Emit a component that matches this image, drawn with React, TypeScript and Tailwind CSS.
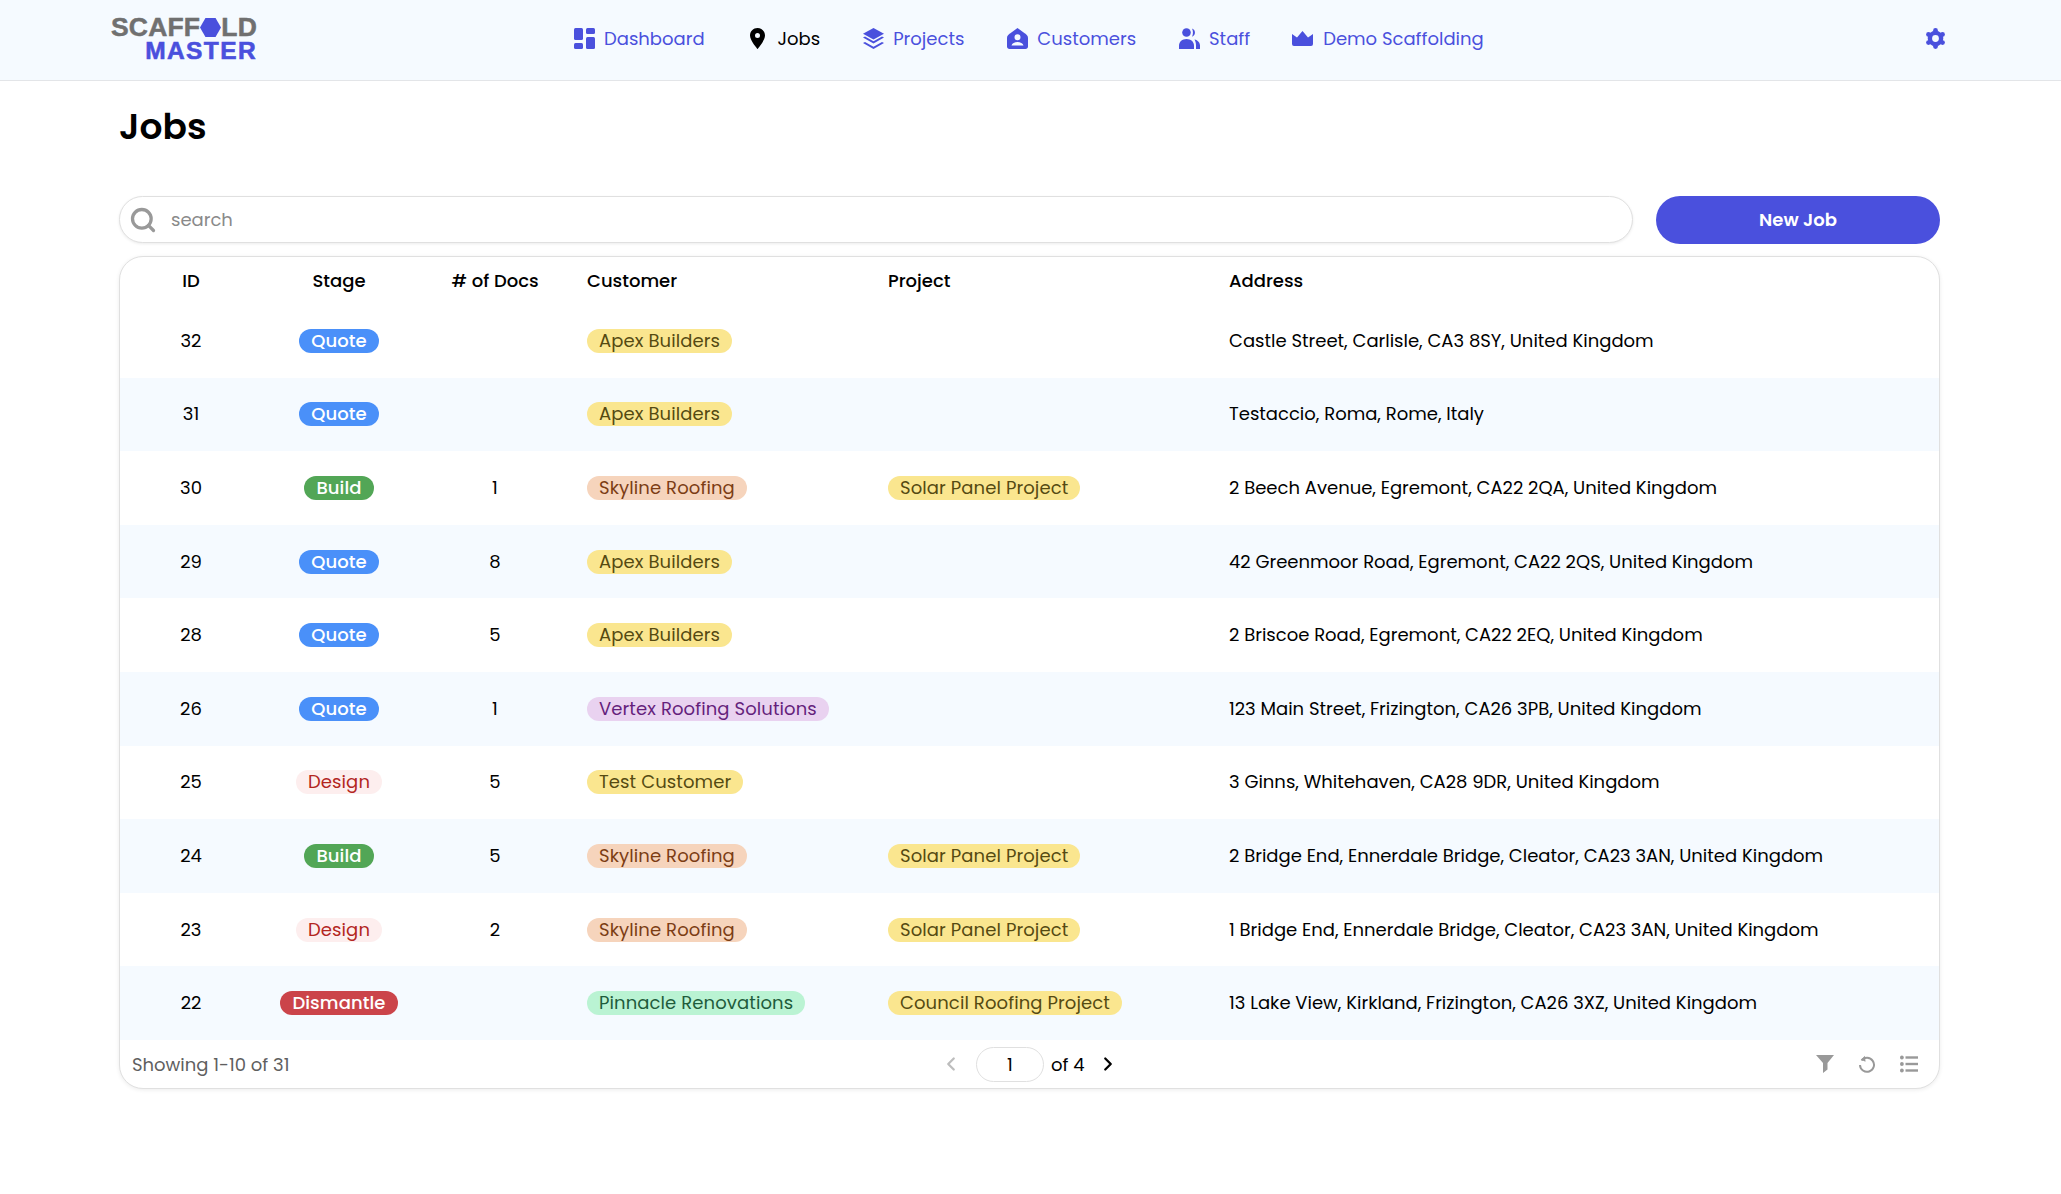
import { Search, ChevronLeft, ChevronRight } from 'lucide-react'
import type { ReactNode } from 'react'

const FONT = "font-['Poppins','Inter','Noto_Sans',sans-serif]"

type Tone = 'quote' | 'build' | 'design' | 'dismantle' | 'yellow' | 'orange' | 'purple' | 'green'

const TONES: Record<Tone, string> = {
  quote: 'bg-[#4a90f9] text-white font-medium',
  build: 'bg-[#52a656] text-white font-medium',
  design: 'bg-[#fdeeee] text-[#b3261e]',
  dismantle: 'bg-[#cb444a] text-white font-medium',
  yellow: 'bg-[#fae68f] text-[#554a12]',
  orange: 'bg-[#f6d4bc] text-[#7c3d14]',
  purple: 'bg-[#e9d2f0] text-[#651f7c]',
  green: 'bg-[#baf3d3] text-[#1f5c3c]',
}

interface Job {
  id: number
  stage: 'Quote' | 'Build' | 'Design' | 'Dismantle'
  docs?: number
  customer: string
  customerTone: Tone
  project?: string
  address: string
}

const STAGE_TONE: Record<Job['stage'], Tone> = {
  Quote: 'quote',
  Build: 'build',
  Design: 'design',
  Dismantle: 'dismantle',
}

const JOBS: Job[] = [
  { id: 32, stage: 'Quote', customer: 'Apex Builders', customerTone: 'yellow', address: 'Castle Street, Carlisle, CA3 8SY, United Kingdom' },
  { id: 31, stage: 'Quote', customer: 'Apex Builders', customerTone: 'yellow', address: 'Testaccio, Roma, Rome, Italy' },
  { id: 30, stage: 'Build', docs: 1, customer: 'Skyline Roofing', customerTone: 'orange', project: 'Solar Panel Project', address: '2 Beech Avenue, Egremont, CA22 2QA, United Kingdom' },
  { id: 29, stage: 'Quote', docs: 8, customer: 'Apex Builders', customerTone: 'yellow', address: '42 Greenmoor Road, Egremont, CA22 2QS, United Kingdom' },
  { id: 28, stage: 'Quote', docs: 5, customer: 'Apex Builders', customerTone: 'yellow', address: '2 Briscoe Road, Egremont, CA22 2EQ, United Kingdom' },
  { id: 26, stage: 'Quote', docs: 1, customer: 'Vertex Roofing Solutions', customerTone: 'purple', address: '123 Main Street, Frizington, CA26 3PB, United Kingdom' },
  { id: 25, stage: 'Design', docs: 5, customer: 'Test Customer', customerTone: 'yellow', address: '3 Ginns, Whitehaven, CA28 9DR, United Kingdom' },
  { id: 24, stage: 'Build', docs: 5, customer: 'Skyline Roofing', customerTone: 'orange', project: 'Solar Panel Project', address: '2 Bridge End, Ennerdale Bridge, Cleator, CA23 3AN, United Kingdom' },
  { id: 23, stage: 'Design', docs: 2, customer: 'Skyline Roofing', customerTone: 'orange', project: 'Solar Panel Project', address: '1 Bridge End, Ennerdale Bridge, Cleator, CA23 3AN, United Kingdom' },
  { id: 22, stage: 'Dismantle', customer: 'Pinnacle Renovations', customerTone: 'green', project: 'Council Roofing Project', address: '13 Lake View, Kirkland, Frizington, CA26 3XZ, United Kingdom' },
]

function Icon({ children, className = '' }: { children: ReactNode; className?: string }) {
  return (
    <svg viewBox="0 0 21 21" fill="currentColor" className={`h-[21px] w-[21px] shrink-0 ${className}`}>
      {children}
    </svg>
  )
}

function NavItem({ icon, label, active, left }: { icon: ReactNode; label: string; active?: boolean; left: string }) {
  return (
    <a className={`flex items-center gap-[9px] text-[18px] leading-[21px] ${left} ${active ? 'text-black' : 'text-[#4a50dd]'}`}>
      {icon}
      <span>{label}</span>
    </a>
  )
}

function Pill({ tone, children }: { tone: Tone; children: ReactNode }) {
  return (
    <span className={`inline-flex h-[24px] items-center whitespace-nowrap rounded-full px-[12px] text-[18px] leading-none tracking-[0.1px] ${TONES[tone]}`}>
      {children}
    </span>
  )
}

function Logo() {
  return (
    <div className="flex w-[146px] flex-col items-end font-['Liberation_Sans',sans-serif] font-bold">
      <div className="flex h-[19px] items-center text-[26.5px] leading-[19px] tracking-[0.2px] text-[#707070] [-webkit-text-stroke:0.5px_#707070]">
        <span>SCAFF</span>
        <svg viewBox="0 0 20 20" className="h-[21px] w-[21px] text-[#4a50dd]" fill="currentColor">
          <path d="M5.2 1h9.6L20 10l-5.2 9H5.2L0 10z" />
        </svg>
        <span>LD</span>
      </div>
      <div className="mt-[5px] flex h-[18px] items-center text-[24.5px] leading-[18px] tracking-[1.4px] text-[#4a50dd] [-webkit-text-stroke:0.6px_#4a50dd]">MASTER</div>
    </div>
  )
}

const ROW = 'grid grid-cols-[142px_154px_160px_301px_342px_1fr] items-center'

export default function App() {
  return (
    <div className={`min-h-[1194px] bg-white text-black ${FONT}`}>
      <header className="flex h-[81px] items-center border-b border-[#e3e5e8] bg-[#f5faff] pb-[3px] pl-[111px] pr-[115px]">
        <Logo />
        <nav className="ml-[317px] flex flex-1 items-center">
          <NavItem left="" label="Dashboard" icon={
            <Icon>
              <rect x="0" y="0" width="9" height="12" rx="1.5" />
              <rect x="0" y="15" width="9" height="6" rx="1.5" />
              <rect x="12" y="0" width="9" height="6" rx="1.5" />
              <rect x="12" y="9" width="9" height="12" rx="1.5" />
            </Icon>
          } />
          <NavItem left="ml-[42px]" label="Jobs" active icon={
            <Icon className="mr-[1px]">
              <path fillRule="evenodd" d="M10.5 0C6.3 0 3 3.300 3 7.500 3 12.600 10.500 21 10.500 21S18 12.600 18 7.500C18 3.300 14.700 0 10.500 0zm0 10a2.500 2.500 0 1 1 0-5 2.500 2.500 0 0 1 0 5z" />
            </Icon>
          } />
          <NavItem left="ml-[43px]" label="Projects" icon={
            <Icon>
              <path d="M10.500 0 21 5.700l-10.500 5.800L0 5.700z" />
              <path d="M0 9.600l2-1 8.500 4.600L19 8.600l2 1-10.500 5.800z" />
              <path d="M0 15.100l2-1 8.500 4.600 8.500-4.600 2 1L10.500 21z" />
            </Icon>
          } />
          <NavItem left="ml-[43px]" label="Customers" icon={
            <Icon>
              <path fillRule="evenodd" d="M10.500 0 3 5.500H2.800C1.300 6.600 0 8 0 10v8.500C0 20 1 21 2.500 21h16c1.500 0 2.500-1 2.500-2.500V10c0-2-1.300-3.400-2.800-4.500H18zm0 6.200a3 3 0 1 1 0 6 3 3 0 0 1 0-6zM4.500 17.500c.5-2.200 3.200-3.500 6-3.500s5.500 1.300 6 3.500z" />
            </Icon>
          } />
          <NavItem left="ml-[43px]" label="Staff" icon={
            <Icon>
              <circle cx="7.500" cy="4.500" r="4.300" />
              <path d="M0 21v-3.500C0 13.800 3.300 11 7.500 11s7.500 2.800 7.500 6.500V21z" />
              <path d="M13 .4a4.400 4.400 0 0 1 0 8.300c1.300-2.500 1.300-5.800 0-8.300z" />
              <path d="M15.500 11.500c3.300.7 5.500 3 5.500 6V21h-4v-3.500c0-2.300-.6-4.300-1.500-6z" />
            </Icon>
          } />
          <NavItem left="ml-[42px]" label="Demo Scaffolding" icon={
            <Icon className="mr-[1px]">
              <path d="M0 6l5 3.500L10.500 3 16 9.500 21 6v10a2 2 0 0 1-2 2H2a2 2 0 0 1-2-2z" />
            </Icon>
          } />
        </nav>
        <svg viewBox="0 0 21 21" className="h-[21px] w-[21px] text-[#4a50dd]" fill="currentColor">
          <circle cx="10.500" cy="10.500" r="5.600" fill="none" stroke="currentColor" strokeWidth="4.400" />
          <circle cx="10.500" cy="2.400" r="2.400" />
          <circle cx="10.500" cy="18.600" r="2.400" />
          <circle cx="3.500" cy="6.450" r="2.400" />
          <circle cx="17.500" cy="6.450" r="2.400" />
          <circle cx="3.500" cy="14.550" r="2.400" />
          <circle cx="17.500" cy="14.550" r="2.400" />
        </svg>
      </header>

      <main className="pl-[119px] pr-[121px]">
        <h1 className="flex h-[92px] items-center text-[36px] font-semibold leading-none">Jobs</h1>

        <div className="mt-[23px] flex h-[48px] gap-[23px]">
          <label className="flex h-[47px] flex-1 items-center rounded-[24px] border border-[#e0e0e0] bg-white pl-[9px] shadow-[0_1px_3px_rgba(0,0,0,0.08)]">
            <Search className="h-[28px] w-[28px] text-[#999999]" strokeWidth={2.8} />
            <input
              placeholder="search"
              className="ml-[14px] flex-1 bg-transparent text-[18px] outline-none placeholder:text-[#8a8a8a]"
            />
          </label>
          <button className="h-[48px] w-[284px] rounded-[24px] bg-[#4a50dd] pb-[2px] text-[18px] font-semibold text-white">New Job</button>
        </div>

        <section className="mt-[12px] overflow-hidden rounded-[24px] border border-[#e0e0e0] bg-white shadow-[0_1px_4px_rgba(0,0,0,0.08)]">
          <div className={`${ROW} h-[47px] text-[18px] font-medium leading-none`}>
            <div className="text-center">ID</div>
            <div className="text-center">Stage</div>
            <div className="pr-[2px] text-center">{'# of Docs'}</div>
            <div className="pl-[11px]">Customer</div>
            <div className="pl-[11px]">Project</div>
            <div className="pl-[10px]">Address</div>
          </div>
          {JOBS.map((job, i) => (
            <div key={job.id} className={`${ROW} h-[73.6px] text-[18px] leading-none ${i % 2 ? 'bg-[#f5faff]' : 'bg-white'}`}>
              <div className="text-center">{job.id}</div>
              <div className="text-center"><Pill tone={STAGE_TONE[job.stage]}>{job.stage}</Pill></div>
              <div className="pr-[2px] text-center">{job.docs}</div>
              <div className="pl-[11px]"><Pill tone={job.customerTone}>{job.customer}</Pill></div>
              <div className="pl-[11px]">{job.project && <Pill tone="yellow">{job.project}</Pill>}</div>
              <div className="whitespace-nowrap pl-[10px]">{job.address}</div>
            </div>
          ))}
          <div className="flex h-[48px] items-center pl-[12px] pr-[21px] pt-[1px] text-[18px]">
            <span className="w-[808px] text-[#5f5f5f]">Showing 1-10 of 31</span>
            <ChevronLeft className="h-[22px] w-[22px] text-[#bdbdbd]" strokeWidth={2.5} />
            <span className="ml-[14px] flex h-[35px] w-[68px] items-center justify-center rounded-[18px] border border-[#e0e0e0]">1</span>
            <span className="ml-[7px]">of 4</span>
            <ChevronRight className="ml-[12px] h-[22px] w-[22px]" strokeWidth={2.5} />
            <div className="ml-auto flex items-center gap-[24px] text-[#999999]">
              <svg viewBox="0 0 18 18" fill="currentColor" className="h-[18px] w-[18px]">
                <path d="M0 0h18l-6.500 8v6.500L7 18V8z" />
              </svg>
              <svg viewBox="0 0 18 18" fill="none" stroke="currentColor" strokeWidth="2" className="h-[18px] w-[18px]">
                <path d="M3.500 5.500a7 7 0 1 1-1.500 4.500" />
                <path d="M7 .8 3 4.700l4.500 2.100" fill="currentColor" stroke="none" />
              </svg>
              <svg viewBox="0 0 18 18" fill="currentColor" className="h-[18px] w-[18px]">
                <circle cx="1.900" cy="2.500" r="1.900" />
                <circle cx="1.900" cy="9" r="1.900" />
                <circle cx="1.900" cy="15.500" r="1.900" />
                <rect x="5.500" y="1.300" width="12.500" height="2.400" />
                <rect x="5.500" y="7.800" width="12.500" height="2.400" />
                <rect x="5.500" y="14.300" width="12.500" height="2.400" />
              </svg>
            </div>
          </div>
        </section>
      </main>
    </div>
  )
}
